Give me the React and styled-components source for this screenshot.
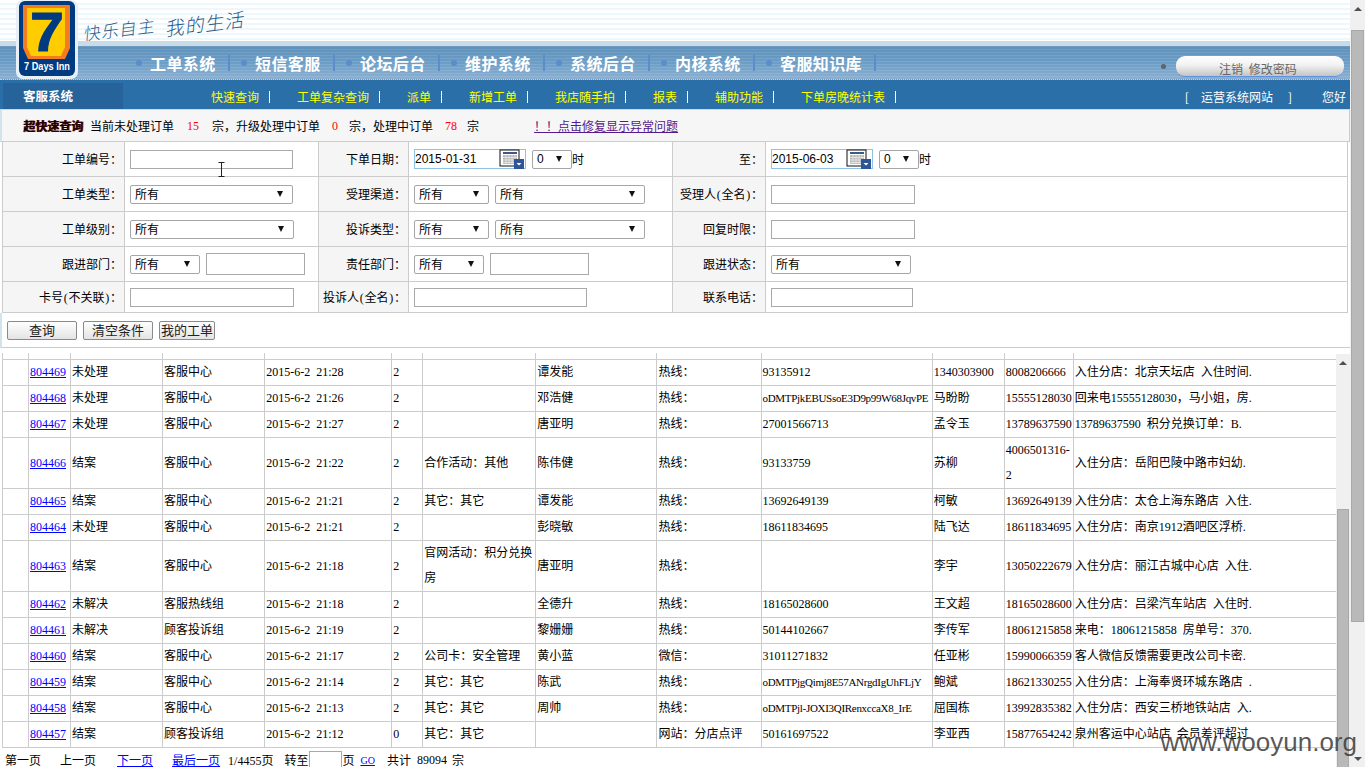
import React from "react";
import styled, { createGlobalStyle } from "styled-components";

const NAV = ["工单系统", "短信客服", "论坛后台", "维护系统", "系统后台", "内核系统", "客服知识库"];
const SUBNAV = ["快速查询", "工单复杂查询", "派单", "新增工单", "我店随手拍", "报表", "辅助功能", "下单房晚统计表"];

const COLS = [26, 42, 92, 102, 127, 31, 113, 121, 104, 171, 72, 69, 263];

const ROWS = [
  ["804469", "未处理", "客服中心", "2015-6-2 21:28", "2", "", "谭发能", "热线：", "93135912", "1340303900", "8008206666", "入住分店：北京天坛店 入住时间."],
  ["804468", "未处理", "客服中心", "2015-6-2 21:26", "2", "", "邓浩健", "热线：", "oDMTPjkEBUSsoE3D9p99W68JqvPE", "马盼盼", "15555128030", "回来电15555128030，马小姐，房."],
  ["804467", "未处理", "客服中心", "2015-6-2 21:27", "2", "", "唐亚明", "热线：", "27001566713", "孟令玉", "13789637590", "13789637590 积分兑换订单：B."],
  ["804466", "结案", "客服中心", "2015-6-2 21:22", "2", "合作活动：其他", "陈伟健", "热线：", "93133759", "苏柳", "4006501316-2", "入住分店：岳阳巴陵中路市妇幼."],
  ["804465", "结案", "客服中心", "2015-6-2 21:21", "2", "其它：其它", "谭发能", "热线：", "13692649139", "柯敏", "13692649139", "入住分店：太仓上海东路店 入住."],
  ["804464", "未处理", "客服中心", "2015-6-2 21:21", "2", "", "彭晓敏", "热线：", "18611834695", "陆飞达", "18611834695", "入住分店：南京1912酒吧区浮桥."],
  ["804463", "结案", "客服中心", "2015-6-2 21:18", "2", "官网活动：积分兑换房", "唐亚明", "热线：", "", "李宇", "13050222679", "入住分店：丽江古城中心店 入住."],
  ["804462", "未解决", "客服热线组", "2015-6-2 21:18", "2", "", "全德升", "热线：", "18165028600", "王文超", "18165028600", "入住分店：吕梁汽车站店 入住时."],
  ["804461", "未解决", "顾客投诉组", "2015-6-2 21:19", "2", "", "黎姗姗", "热线：", "50144102667", "李传军", "18061215858", "来电：18061215858 房单号：370."],
  ["804460", "结案", "客服中心", "2015-6-2 21:17", "2", "公司卡：安全管理", "黄小蓝", "微信：", "31011271832", "任亚彬", "15990066359", "客人微信反馈需要更改公司卡密."],
  ["804459", "结案", "客服中心", "2015-6-2 21:14", "2", "其它：其它", "陈武", "热线：", "oDMTPjgQimj8E57ANrgdIgUhFLjY", "鲍斌", "18621330255", "入住分店：上海奉贤环城东路店 ."],
  ["804458", "结案", "客服中心", "2015-6-2 21:13", "2", "其它：其它", "周帅", "热线：", "oDMTPjl-JOXI3QIRenxccaX8_IrE", "屈国栋", "13992835382", "入住分店：西安三桥地铁站店 入."],
  ["804457", "结案", "顾客投诉组", "2015-6-2 21:12", "0", "其它：其它", "", "网站：分店点评", "50161697522", "李亚西", "15877654242", "泉州客运中心站店 会员差评超过"],
];

const GlobalStyle = createGlobalStyle`
  html, body {
    margin: 0;
    padding: 0;
    overflow: hidden;
    background: #fff;
  }
  body {
    font-family: "Liberation Serif", "Noto Sans CJK SC", serif;
    font-size: 12px;
    color: #000;
  }
`;

const Page = styled.div`
  position: relative;
  display: flex;
  width: 1365px;
  height: 767px;
  overflow: hidden;
`;

const Main = styled.div`
  display: flex;
  flex-direction: column;
  width: 1350px;
  flex-shrink: 0;
`;

const TopStrip = styled.div`
  height: 41px;
  padding-left: 84px;
  display: flex;
  align-items: flex-start;
  gap: 10px;
  background: repeating-linear-gradient(#ffffff 0, #ffffff 3px, #eef7fc 3px, #eef7fc 5px);
  border-bottom: 5px solid #c9dbe6;
  overflow: hidden;
`;

const Slogan = styled.span`
  margin-top: ${(p) => p.$top}px;
  font-family: "Noto Sans CJK SC", sans-serif;
  font-size: ${(p) => p.$size}px;
  font-weight: 300;
  color: #2b5a85;
  letter-spacing: 1px;
  transform: rotate(-7deg) skewX(-12deg);
`;

const LogoMark = styled.svg`
  position: absolute;
  left: 16px;
  top: 0;
`;

const NavBand = styled.div`
  height: 34px;
  box-sizing: border-box;
  padding: 0 6px 0 136px;
  display: flex;
  align-items: center;
  background:
    repeating-linear-gradient(rgba(255, 255, 255, 0.1) 0, rgba(255, 255, 255, 0.1) 1px, transparent 1px, transparent 3px),
    linear-gradient(#5d90ba, #6b9dc6 50%, #8bb0d2);
  border-bottom: 1px dotted #b9d0e3;
`;

const NavItem = styled.div`
  width: 105px;
  flex-shrink: 0;
  display: flex;
  align-items: center;
`;

const NavDot = styled.span`
  width: 6px;
  height: 6px;
  flex-shrink: 0;
  border-radius: 50%;
  background: #5b8ccb;
`;

const NavLabel = styled.span`
  margin-left: 8px;
  font-family: "Noto Sans CJK SC", sans-serif;
  font-size: 16px;
  font-weight: 700;
  letter-spacing: 0.4px;
  line-height: 22px;
  color: #fff;
  white-space: nowrap;
`;

const NavSep = styled.span`
  margin-left: 12px;
  width: 2px;
  height: 16px;
  flex-shrink: 0;
  background: #5b8ccb;
`;

const NavRight = styled.div`
  margin-left: auto;
  display: flex;
  align-items: center;
  gap: 10px;
`;

const GrayDot = styled.span`
  width: 5px;
  height: 5px;
  border-radius: 50%;
  background: #5f6468;
  margin-top: 8px;
`;

const UserPill = styled.div`
  width: 168px;
  height: 21px;
  box-sizing: border-box;
  padding: 4px 0 0 43px;
  border-radius: 9px;
  border-bottom: 1px solid #5f93dd;
  background: linear-gradient(#ffffff, #f2f2f2 45%, #c4c4c4);
  font-family: "Noto Sans CJK SC", sans-serif;
  font-size: 12px;
  line-height: 17px;
  color: #666;
  word-spacing: 3px;
  margin-top: 8px;
`;

const SubNav = styled.div`
  height: 29px;
  padding-left: 3px;
  display: flex;
  align-items: flex-end;
  background: #2a6fa7;
  border-bottom: 1px solid #c6dbe8;
  color: #fff;
  font-family: "Noto Sans CJK SC", sans-serif;
`;

const SystemTab = styled.div`
  width: 100px;
  height: 26px;
  padding-left: 20px;
  background: #25639a;
  font-size: 12.5px;
  font-weight: 700;
  line-height: 26px;
`;

const SubLinks = styled.div`
  margin-left: 88px;
  height: 29px;
  box-sizing: border-box;
  padding-top: 4px;
  display: flex;
  align-items: center;
`;

const SubLink = styled.span`
  color: #ffff00;
  padding-right: 10px;
  margin-right: 27px;
  white-space: nowrap;
  line-height: 12px;
  border-right: 1px solid #fff;
`;

const SubRight = styled.div`
  margin-left: auto;
  height: 29px;
  box-sizing: border-box;
  padding: 4px 4px 0 0;
  display: flex;
  align-items: center;
`;

const SubRightText = styled.span`
  margin-left: ${(p) => p.$gap}px;
  white-space: nowrap;
`;

const Notice = styled.div`
  height: 32px;
  box-sizing: border-box;
  padding: 1px 0 0 21px;
  display: flex;
  align-items: center;
  background: #f6f6f6;
  border-left: 2px solid #d2e3ee;
  border-right: 1px solid #ccc;
  border-bottom: 1px solid #ccc;
  white-space: nowrap;
`;

const NoticeTitle = styled.b`
  width: 67px;
  color: #200;
  text-shadow: 1px 0 0 #611;
`;

const Count = styled.span`
  color: #f00;
  margin: 0 ${(p) => p.$r}px 0 ${(p) => p.$l}px;
`;

const NoticeLink = styled.a`
  margin-left: 55px;
  color: #551a8b;
  text-decoration: underline;
`;

const FormTable = styled.table`
  width: 1346px;
  margin-left: 2px;
  table-layout: fixed;
  border-collapse: separate;
  border-spacing: 0;
  border-left: 1px solid #ccc;
  box-sizing: border-box;
`;

const LabelCell = styled.td`
  height: ${(p) => p.$h || 33}px;
  padding: 0 2px 1px 0;
  background: #f5f5f5;
  text-align: right;
  white-space: nowrap;
  border-right: 1px solid #ccc;
  border-bottom: 1px solid #ccc;
`;

const Paren = styled.span`
  padding: 0 0.75px;
`;

const ValueCell = styled.td`
  padding: 0 0 0 5px;
  border-right: 1px solid #ccc;
  border-bottom: 1px solid #ccc;
`;

const Fields = styled.div`
  display: flex;
  align-items: center;
  gap: 6px;
`;

const Inline = styled.div`
  display: flex;
  align-items: center;
`;

const TextBox = styled.div`
  position: relative;
  width: ${(p) => p.$w}px;
  height: ${(p) => p.$h || 19}px;
  box-sizing: border-box;
  border: 1px solid #a9a9a9;
  background: #fff;
`;

const SelectBox = styled.div`
  width: ${(p) => p.$w}px;
  height: 19px;
  box-sizing: border-box;
  padding: 0 9px 1px 4px;
  display: flex;
  align-items: center;
  justify-content: space-between;
  border: 1px solid #a6a6a6;
  border-radius: 2px;
  background: #fff;
  font-family: "Liberation Sans", "Noto Sans CJK SC", sans-serif;

  &::after {
    content: "";
    border-left: 3px solid transparent;
    border-right: 3px solid transparent;
    border-top: 6px solid #111;
  }
`;

const DateBox = styled.div`
  width: ${(p) => p.$w}px;
  height: 20px;
  box-sizing: border-box;
  padding-right: 1px;
  display: flex;
  align-items: center;
  justify-content: space-between;
  border: 1px solid #8fc3e6;
  font-family: "Liberation Sans", sans-serif;
`;

const IBeam = styled.svg`
  position: absolute;
  left: 87px;
  top: 11px;
`;

const Buttons = styled.div`
  height: 34px;
  padding-left: 5px;
  display: flex;
  align-items: center;
  gap: 6px;
  border-bottom: 1px solid #ccc;
  border-left: 2px solid #d2e3ee;
`;

const Button = styled.button`
  width: ${(p) => p.$w}px;
  height: 19px;
  padding: 0;
  border: 1px solid #8a8a8a;
  border-radius: 2px;
  background: linear-gradient(#fefefe, #e4e4e4);
  font-family: "Noto Sans CJK SC", sans-serif;
  font-size: 13px;
  line-height: 16px;
  color: #222;
`;

const Lower = styled.div`
  margin-top: 5px;
  display: flex;
  flex: 1;
  min-height: 0;
`;

const ListColumn = styled.div`
  width: 1336px;
  flex-shrink: 0;
  display: flex;
  flex-direction: column;
`;

const DataTable = styled.table`
  width: 1334px;
  margin-left: 2px;
  table-layout: fixed;
  border-collapse: separate;
  border-spacing: 0;
  border-left: 1px solid #ccc;
  box-sizing: content-box;
`;

const Td = styled.td`
  padding: 0 0 0 1px;
  border-right: 1px solid #ccc;
  border-bottom: 1px solid #ccc;
  line-height: 25px;
  word-spacing: 3px;
  overflow: hidden;
  ${(p) => p.$tight && "font-size: 11px; letter-spacing: -0.3px;"}

  &:nth-child(10),
  &:nth-child(13) {
    white-space: nowrap;
  }
  &:last-child {
    border-right: 0;
  }
`;

const TopEdge = styled.td`
  height: 6px;
  padding: 0;
  border-right: 1px solid #ccc;
  border-bottom: 1px solid #ccc;
  &:last-child {
    border-right: 0;
  }
`;

const TicketLink = styled.a`
  color: #00f;
  text-decoration: underline;
`;

const Pager = styled.div`
  height: 19px;
  box-sizing: border-box;
  padding: 5px 0 0 5px;
  display: flex;
  align-items: center;
  white-space: nowrap;
`;

const PagerItem = styled.span`
  margin-right: ${(p) => p.$gap || 0}px;
  word-spacing: 3px;
`;

const PagerLink = styled.a`
  margin-right: ${(p) => p.$gap || 0}px;
  color: #00f;
  text-decoration: underline;
  font-size: ${(p) => p.$size || 12}px;
`;

const PageInput = styled.div`
  width: 33px;
  height: 18px;
  margin-left: 1px;
  flex-shrink: 0;
  box-sizing: border-box;
  border: 1px solid #a9a9a9;
  border-bottom: 0;
`;

const Scrollbar = styled.div`
  width: ${(p) => p.$w}px;
  flex-shrink: 0;
  margin-top: ${(p) => p.$top || 0}px;
  padding: 0 1px;
  box-sizing: border-box;
  display: flex;
  flex-direction: column;
  align-items: stretch;
  background: #f0f0f0;
  overflow: hidden;
`;

const ScrollArrow = styled.div`
  height: 17px;
  flex-shrink: 0;
  display: flex;
  align-items: center;
  justify-content: center;
  &::after {
    content: "";
    border-left: 4px solid transparent;
    border-right: 4px solid transparent;
    ${(p) => (p.$down ? "border-top: 4px solid #505050;" : "border-bottom: 4px solid #505050;")}
  }
`;

const ScrollThumb = styled.div`
  flex-shrink: 0;
  margin-top: ${(p) => p.$gap}px;
  height: ${(p) => p.$h}px;
  background: #b9b9b9;
  border: 1px solid #a9a9a9;
  box-sizing: border-box;
`;

const ScrollFill = styled.div`
  flex: 1;
`;

const Watermark = styled.div`
  position: absolute;
  right: 8px;
  top: 722px;
  font-family: "Liberation Sans", sans-serif;
  font-size: 26px;
  line-height: 40px;
  color: rgba(58, 58, 58, 0.85);
  white-space: nowrap;
`;

const Logo = () => (
  <LogoMark width="62" height="79" viewBox="0 0 62 79">
    <rect x="0" y="0" width="62" height="79" rx="7" fill="#e6f0f6" />
    <rect x="3" y="1" width="56" height="75" rx="6" fill="#003a80" />
    <path d="M7 5h46a1 1 0 0 1 1 1v42l-5 11H12L7 48z" fill="#f47b20" />
    <path d="M11 8h38v39l-4 9H15l-4-9z" fill="#ffcc00" />
    <text
      x="14"
      y="51"
      fontFamily="Liberation Sans, sans-serif"
      fontSize="55"
      fontWeight="700"
      textLength="34"
      lengthAdjust="spacingAndGlyphs"
      fill="#003a80"
      stroke="#003a80"
      strokeWidth="1"
    >
      7
    </text>
    <text
      x="31"
      y="70"
      textAnchor="middle"
      fontFamily="Liberation Sans, sans-serif"
      fontSize="10"
      fontWeight="700"
      textLength="46"
      lengthAdjust="spacingAndGlyphs"
      fill="#fff"
    >
      7 Days Inn
    </text>
  </LogoMark>
);

const CalendarIcon = () => (
  <svg width="25" height="20" viewBox="0 0 25 20">
    <rect x="1" y="1" width="19" height="16" fill="#fff" stroke="#111" />
    <rect x="4" y="3" width="14" height="2" fill="#3a5a8c" />
    <rect x="4" y="6" width="14" height="9" fill="#b8b8b8" />
    <path d="M4 8.5h14M4 11h14M4 13.5h14M7 6v9M10 6v9M13 6v9M16 6v9" stroke="#eee" strokeWidth="0.7" />
    <rect x="15" y="10" width="10" height="10" fill="#2f5597" />
    <path d="M17.5 14h5l-2.5 2.5z" fill="#fff" />
  </svg>
);

const Select = ({ w, children = "所有" }) => <SelectBox $w={w}>{children}</SelectBox>;

const DateField = ({ w, value }) => (
  <DateBox $w={w}>
    <span>{value}</span>
    <CalendarIcon />
  </DateBox>
);

const Hour = () => (
  <Inline>
    <Select w={40}>0</Select>
    时
  </Inline>
);

const App = () => {
  return (
    <Page>
      <GlobalStyle />
      <Main>
        <TopStrip>
          <Slogan $size={17} $top={16}>快乐自主</Slogan>
          <Slogan $size={19} $top={9}>我的生活</Slogan>
        </TopStrip>
        <NavBand>
          {NAV.map((item) => (
            <NavItem key={item}>
              <NavDot />
              <NavLabel>{item}</NavLabel>
              <NavSep />
            </NavItem>
          ))}
          <NavRight>
            <GrayDot />
            <UserPill>注销 修改密码</UserPill>
          </NavRight>
        </NavBand>
        <SubNav>
          <SystemTab>客服系统</SystemTab>
          <SubLinks>
            {SUBNAV.map((item) => (
              <SubLink key={item}>{item}</SubLink>
            ))}
          </SubLinks>
          <SubRight>
            <SubRightText $gap={0}>[</SubRightText>
            <SubRightText $gap={12}>运营系统网站</SubRightText>
            <SubRightText $gap={15}>]</SubRightText>
            <SubRightText $gap={30}>您好</SubRightText>
          </SubRight>
        </SubNav>
        <Notice>
          <NoticeTitle>超快速查询</NoticeTitle>
          当前未处理订单
          <Count $l={13} $r={13}>15</Count>
          宗，升级处理中订单
          <Count $l={12} $r={11}>0</Count>
          宗，处理中订单
          <Count $l={12} $r={10}>78</Count>
          宗
          <NoticeLink>！！点击修复显示异常问题</NoticeLink>
        </Notice>
        <FormTable>
          <colgroup>
            <col style={{ width: 122 }} />
            <col style={{ width: 194 }} />
            <col style={{ width: 90 }} />
            <col style={{ width: 264 }} />
            <col style={{ width: 93 }} />
            <col />
          </colgroup>
          <tbody>
            <tr>
              <LabelCell>工单编号：</LabelCell>
              <ValueCell>
                <TextBox $w={163}>
                  <IBeam width="7" height="15" viewBox="0 0 7 15">
                    <path d="M0.5 0.5h6M0.5 14.5h6M3.5 0.5v14" stroke="#222" fill="none" />
                  </IBeam>
                </TextBox>
              </ValueCell>
              <LabelCell>下单日期：</LabelCell>
              <ValueCell>
                <Fields>
                  <DateField w={112} value="2015-01-31" />
                  <Hour />
                </Fields>
              </ValueCell>
              <LabelCell>至：</LabelCell>
              <ValueCell>
                <Fields>
                  <DateField w={102} value="2015-06-03" />
                  <Hour />
                </Fields>
              </ValueCell>
            </tr>
            <tr>
              <LabelCell>工单类型：</LabelCell>
              <ValueCell>
                <Select w={163} />
              </ValueCell>
              <LabelCell>受理渠道：</LabelCell>
              <ValueCell>
                <Fields>
                  <Select w={75} />
                  <Select w={150} />
                </Fields>
              </ValueCell>
              <LabelCell>
                受理人<Paren>(</Paren>全名<Paren>)</Paren>：
              </LabelCell>
              <ValueCell>
                <TextBox $w={144} />
              </ValueCell>
            </tr>
            <tr>
              <LabelCell>工单级别：</LabelCell>
              <ValueCell>
                <Select w={164} />
              </ValueCell>
              <LabelCell>投诉类型：</LabelCell>
              <ValueCell>
                <Fields>
                  <Select w={75} />
                  <Select w={150} />
                </Fields>
              </ValueCell>
              <LabelCell>回复时限：</LabelCell>
              <ValueCell>
                <TextBox $w={144} />
              </ValueCell>
            </tr>
            <tr>
              <LabelCell>跟进部门：</LabelCell>
              <ValueCell>
                <Fields>
                  <Select w={70} />
                  <TextBox $w={99} $h={22} />
                </Fields>
              </ValueCell>
              <LabelCell>责任部门：</LabelCell>
              <ValueCell>
                <Fields>
                  <Select w={70} />
                  <TextBox $w={99} $h={22} />
                </Fields>
              </ValueCell>
              <LabelCell>跟进状态：</LabelCell>
              <ValueCell>
                <Select w={140} />
              </ValueCell>
            </tr>
            <tr>
              <LabelCell $h={29}>
                卡号<Paren>(</Paren>不关联<Paren>)</Paren>：
              </LabelCell>
              <ValueCell>
                <TextBox $w={164} />
              </ValueCell>
              <LabelCell $h={29}>
                投诉人<Paren>(</Paren>全名<Paren>)</Paren>：
              </LabelCell>
              <ValueCell>
                <TextBox $w={173} />
              </ValueCell>
              <LabelCell $h={29}>联系电话：</LabelCell>
              <ValueCell>
                <TextBox $w={142} />
              </ValueCell>
            </tr>
          </tbody>
        </FormTable>
        <Buttons>
          <Button $w={70}>查询</Button>
          <Button $w={70}>清空条件</Button>
          <Button $w={56}>我的工单</Button>
        </Buttons>
        <Lower>
          <ListColumn>
            <DataTable>
              <colgroup>
                {COLS.map((w, i) => (
                  <col key={i} style={{ width: w }} />
                ))}
              </colgroup>
              <tbody>
                <tr>
                  {COLS.map((w, i) => (
                    <TopEdge key={i} />
                  ))}
                </tr>
                {ROWS.map((row) => (
                  <tr key={row[0]}>
                    <Td />
                    <Td>
                      <TicketLink>{row[0]}</TicketLink>
                    </Td>
                    {row.slice(1).map((cell, i) => (
                      <Td key={i} $tight={cell.length > 25 && i === 7}>
                        {cell}
                      </Td>
                    ))}
                  </tr>
                ))}
              </tbody>
            </DataTable>
            <Pager>
              <PagerItem $gap={19}>第一页</PagerItem>
              <PagerItem $gap={21}>上一页</PagerItem>
              <PagerLink $gap={19}>下一页</PagerLink>
              <PagerLink $gap={8}>最后一页</PagerLink>
              <PagerItem $gap={11}>1/4455页</PagerItem>
              <PagerItem>转至</PagerItem>
              <PageInput />
              <PagerItem $gap={6}>页</PagerItem>
              <PagerLink $gap={12} $size={10}>GO</PagerLink>
              <PagerItem $gap={6}>共计</PagerItem>
              <PagerItem $gap={5}>89094</PagerItem>
              <PagerItem>宗</PagerItem>
            </Pager>
          </ListColumn>
          <Scrollbar $w={14} $top={1}>
            <ScrollArrow />
            <ScrollThumb $gap={138} $h={300} />
          </Scrollbar>
        </Lower>
      </Main>
      <Scrollbar $w={15}>
        <ScrollArrow />
        <ScrollThumb $gap={13} $h={592} />
        <ScrollFill />
        <ScrollArrow $down />
      </Scrollbar>
      <Watermark>www.wooyun.org</Watermark>
      <Logo />
    </Page>
  );
};

export default App;
